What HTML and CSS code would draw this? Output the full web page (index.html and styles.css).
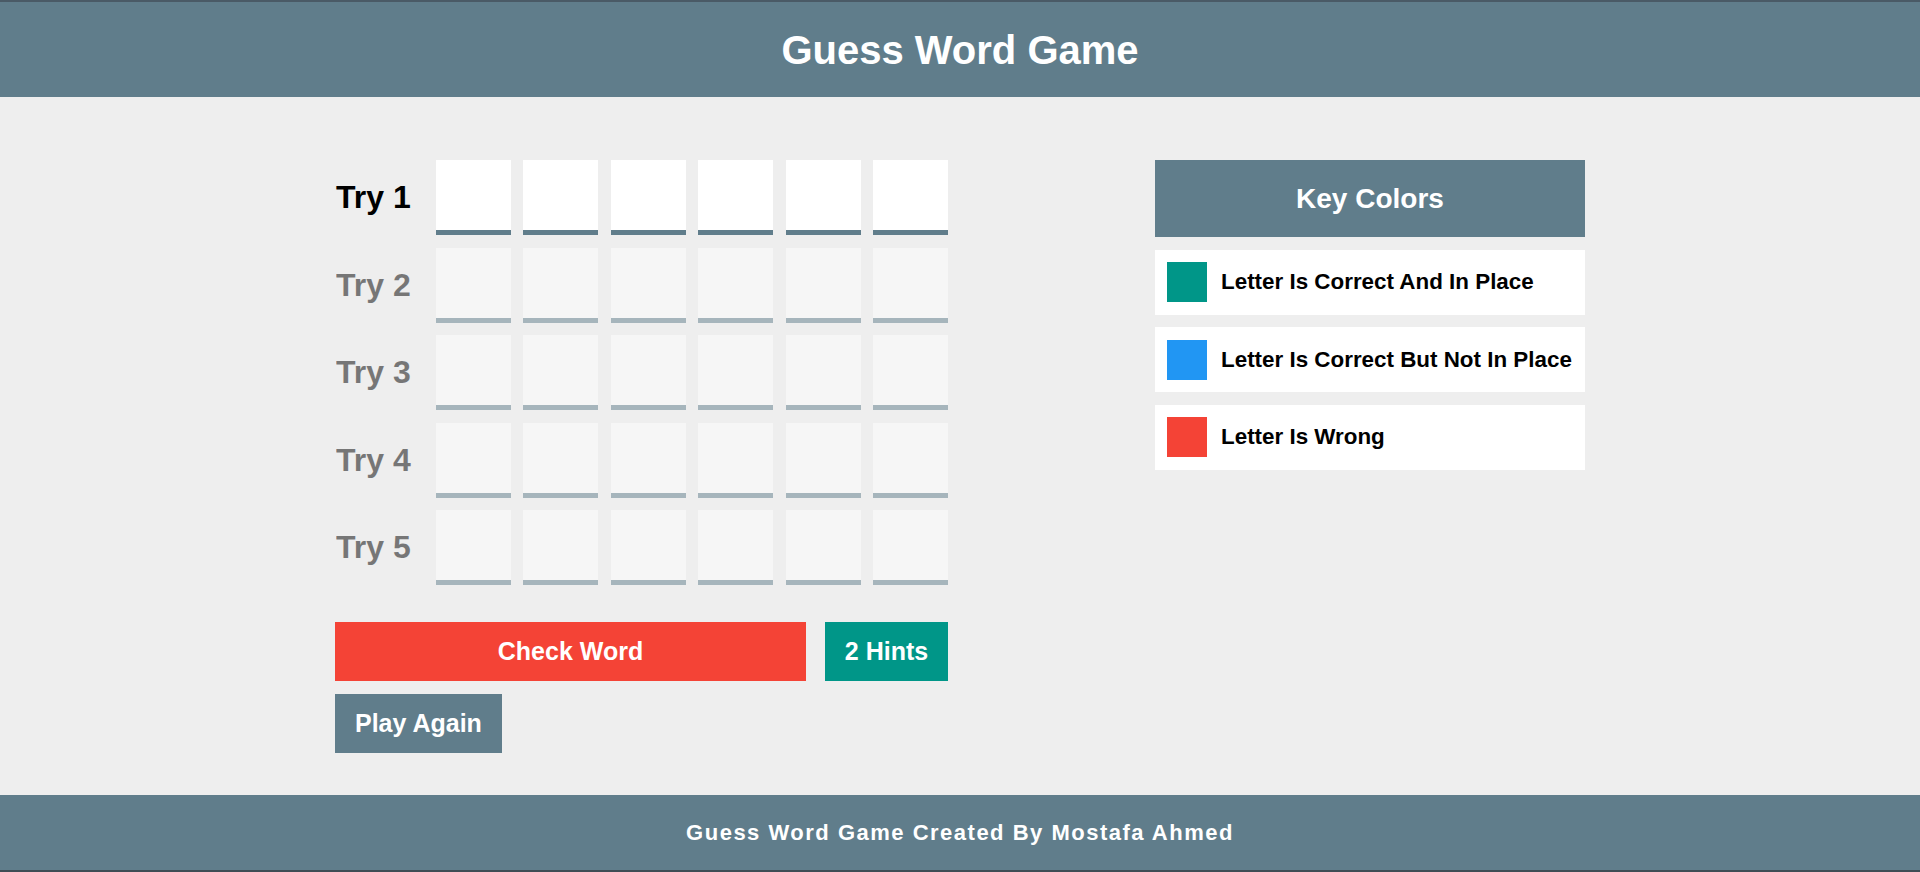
FILE: index.html
```html
<!DOCTYPE html>
<html lang="en">
<head>
<meta charset="UTF-8">
<title>Guess Word Game</title>
<link rel="stylesheet" href="styles.css">
</head>
<body>
<header class="site-header">
  <h1 class="site-title">Guess Word Game</h1>
</header>
<main class="game-area">
  <div class="game-container">
    <section class="game">
      <div class="tries">
        <div class="try-row">
          <span class="try-label">Try 1</span>
          <div class="letters">
            <input class="letter" type="text" maxlength="1">
            <input class="letter" type="text" maxlength="1">
            <input class="letter" type="text" maxlength="1">
            <input class="letter" type="text" maxlength="1">
            <input class="letter" type="text" maxlength="1">
            <input class="letter" type="text" maxlength="1">
          </div>
        </div>
        <div class="try-row disabled">
          <span class="try-label">Try 2</span>
          <div class="letters">
            <input class="letter" type="text" maxlength="1" disabled>
            <input class="letter" type="text" maxlength="1" disabled>
            <input class="letter" type="text" maxlength="1" disabled>
            <input class="letter" type="text" maxlength="1" disabled>
            <input class="letter" type="text" maxlength="1" disabled>
            <input class="letter" type="text" maxlength="1" disabled>
          </div>
        </div>
        <div class="try-row disabled">
          <span class="try-label">Try 3</span>
          <div class="letters">
            <input class="letter" type="text" maxlength="1" disabled>
            <input class="letter" type="text" maxlength="1" disabled>
            <input class="letter" type="text" maxlength="1" disabled>
            <input class="letter" type="text" maxlength="1" disabled>
            <input class="letter" type="text" maxlength="1" disabled>
            <input class="letter" type="text" maxlength="1" disabled>
          </div>
        </div>
        <div class="try-row disabled">
          <span class="try-label">Try 4</span>
          <div class="letters">
            <input class="letter" type="text" maxlength="1" disabled>
            <input class="letter" type="text" maxlength="1" disabled>
            <input class="letter" type="text" maxlength="1" disabled>
            <input class="letter" type="text" maxlength="1" disabled>
            <input class="letter" type="text" maxlength="1" disabled>
            <input class="letter" type="text" maxlength="1" disabled>
          </div>
        </div>
        <div class="try-row disabled">
          <span class="try-label">Try 5</span>
          <div class="letters">
            <input class="letter" type="text" maxlength="1" disabled>
            <input class="letter" type="text" maxlength="1" disabled>
            <input class="letter" type="text" maxlength="1" disabled>
            <input class="letter" type="text" maxlength="1" disabled>
            <input class="letter" type="text" maxlength="1" disabled>
            <input class="letter" type="text" maxlength="1" disabled>
          </div>
        </div>
      </div>
      <div class="controls">
        <div class="control-row">
          <button class="btn btn-check">Check Word</button>
          <button class="btn btn-hint">2 Hints</button>
        </div>
        <div class="control-row">
          <button class="btn btn-again">Play Again</button>
        </div>
      </div>
    </section>
    <aside class="key-colors">
      <h2 class="key-title">Key Colors</h2>
      <div class="key-item">
        <span class="swatch swatch-in-place"></span>
        <span class="key-text">Letter Is Correct And In Place</span>
      </div>
      <div class="key-item">
        <span class="swatch swatch-not-in-place"></span>
        <span class="key-text">Letter Is Correct But Not In Place</span>
      </div>
      <div class="key-item">
        <span class="swatch swatch-wrong"></span>
        <span class="key-text">Letter Is Wrong</span>
      </div>
    </aside>
  </div>
</main>
<footer class="site-footer">
  <p class="footer-text">Guess Word Game Created By Mostafa Ahmed</p>
</footer>
</body>
</html>
```
FILE: styles.css
```css
* {
  box-sizing: border-box;
}

html, body {
  margin: 0;
  padding: 0;
}

body {
  font-family: "Liberation Sans", Arial, sans-serif;
  background: #eeeeee;
  min-height: 100vh;
  display: flex;
  flex-direction: column;
}

.site-header {
  background: #607d8b;
  border-top: 2px solid #4a5a66;
  height: 97px;
  display: flex;
  align-items: center;
  justify-content: center;
}

.site-title {
  margin: 0;
  color: #ffffff;
  font-size: 40px;
  font-weight: bold;
  line-height: 46px;
}

.game-area {
  flex: 1;
  padding-top: 63px;
}

.game-container {
  width: 1250px;
  margin: 0 auto;
  display: flex;
  justify-content: space-between;
  align-items: flex-start;
}

.game {
  width: 613px;
}

.tries {
  display: flex;
  flex-direction: column;
  gap: 12.5px;
}

.try-row {
  display: flex;
  align-items: center;
}

.try-row.disabled {
  opacity: 0.5;
}

.try-label {
  width: 101px;
  padding-left: 1px;
  font-size: 32px;
  font-weight: bold;
  color: #000000;
}

.letters {
  display: flex;
  gap: 12.5px;
}

.letter {
  width: 75px;
  height: 75px;
  margin: 0;
  padding: 0;
  border: none;
  border-bottom: 5px solid #607d8b;
  background: #ffffff;
  outline: none;
  font-family: inherit;
}

.controls {
  margin-top: 37px;
  display: flex;
  flex-direction: column;
  gap: 13px;
}

.control-row {
  display: flex;
  gap: 19px;
}

.btn {
  border: none;
  color: #ffffff;
  font-family: "Liberation Sans", Arial, sans-serif;
  font-weight: bold;
  font-size: 25px;
  line-height: 29px;
  padding: 15px 20px;
  cursor: pointer;
}

.btn-check {
  flex: 1;
  background: #f44336;
}

.btn-hint {
  width: 123px;
  padding: 15px 0;
  background: #009688;
}

.btn-again {
  background: #607d8b;
}

.key-colors {
  width: 430px;
  display: flex;
  flex-direction: column;
  gap: 12.5px;
}

.key-title {
  margin: 0;
  background: #607d8b;
  color: #ffffff;
  text-align: center;
  font-size: 28px;
  font-weight: bold;
  line-height: 33px;
  padding: 22px 0;
}

.key-item {
  background: #ffffff;
  height: 65px;
  padding: 0 12px;
  display: flex;
  align-items: center;
  gap: 14px;
}

.swatch {
  width: 40px;
  height: 40px;
  flex-shrink: 0;
}

.swatch-in-place {
  background: #009688;
}

.swatch-not-in-place {
  background: #2196f3;
}

.swatch-wrong {
  background: #f44336;
}

.key-text {
  font-size: 22.4px;
  font-weight: bold;
  color: #000000;
}

.site-footer {
  background: #607d8b;
  height: 77px;
  border-bottom: 2px solid #3f4d55;
  display: flex;
  align-items: center;
  justify-content: center;
}

.footer-text {
  margin: 0;
  color: #ffffff;
  font-size: 22px;
  font-weight: bold;
  letter-spacing: 1.5px;
}
```
